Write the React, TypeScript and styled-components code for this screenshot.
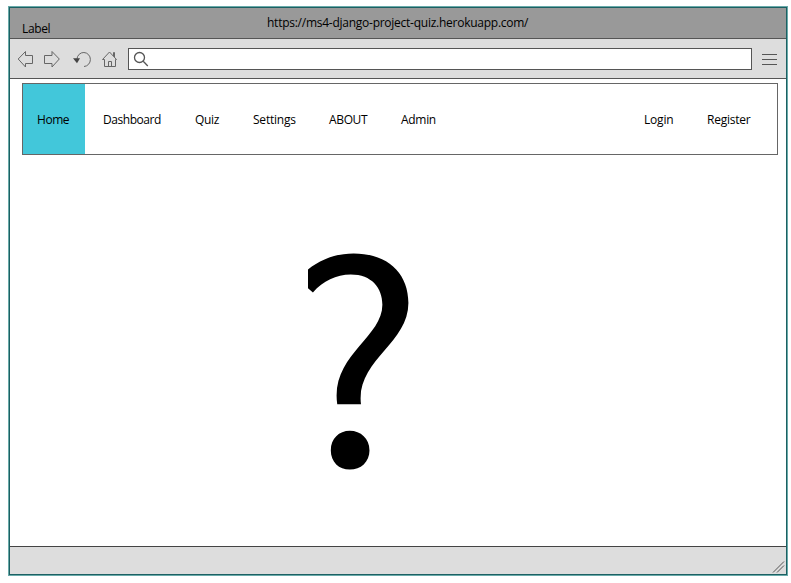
import React from 'react';
import styled, { createGlobalStyle } from 'styled-components';

const GlobalStyle = createGlobalStyle`
  * { box-sizing: border-box; }
  body { margin: 0; background: #fff; color: #000; font: 12px/16px "Segoe UI", "Open Sans", "Noto Sans", sans-serif; }
`;

const Browser = styled.main`
  display: flex;
  flex-direction: column;
  width: 780px;
  height: 570px;
  margin: 6px 0 0 8px;
  border: 1px solid #69aaa9;
  outline: 1px solid #1c6063;
  outline-offset: -2px;
  padding: 1px;
`;

const TitleBar = styled.header`
  display: flex;
  height: 31px;
  flex: none;
  background: #999;
  border-bottom: 1px solid #555;
`;

const Text = styled.span<{ $spacing?: number }>`
  white-space: nowrap;
  letter-spacing: ${p => p.$spacing ?? -0.35}px;
`;

const TabTitle = styled(Text)`
  width: 245px;
  padding: 13px 0 0 12px;
`;

const Address = styled(Text)`
  padding: 7px 0 0 12px;
`;

const Toolbar = styled.div`
  display: flex;
  align-items: center;
  height: 40px;
  flex: none;
  background: #ddd;
  border-bottom: 1px solid #555;
`;

const Tools = styled.svg`
  width: 118px;
  height: 39px;
  flex: none;
  fill: none;
  stroke: #666;
`;

const SearchField = styled.div`
  width: 624px;
  height: 22px;
  background: #fff;
  border: 1px solid #555;
  padding: 2px 0 0 4px;
`;

const SearchIcon = styled.svg`
  display: block;
  width: 17px;
  height: 17px;
  fill: none;
  stroke: #555;
  stroke-width: 1.3;
`;

const MenuButton = styled.div`
  display: flex;
  flex-direction: column;
  gap: 4px;
  width: 15px;
  margin: 2px 0 0 10px;
`;

const MenuLine = styled.div`
  height: 1px;
  background: #555;
`;

const Page = styled.section`
  flex: 1;
  min-height: 0;
  padding: 4px 8px 0 12px;
`;

const Nav = styled.nav`
  display: flex;
  height: 72px;
  border: 1px solid #666;
`;

const NavItem = styled.a<{ $width: number; $active?: boolean }>`
  display: flex;
  align-items: center;
  width: ${p => p.$width}px;
  padding: 1px 0 0 ${p => (p.$active ? 14 : 18)}px;
  background: ${p => (p.$active ? '#42c7da' : 'transparent')};
`;

const Account = styled.div`
  display: flex;
  margin-left: auto;
`;

const QuestionMark = styled.div`
  margin: 39px 0 0 269px;
  width: 140px;
  font-family: "Noto Sans CJK SC", sans-serif;
  font-size: 279px;
  line-height: 300px;
  transform: scaleX(1.05);
  transform-origin: 118px 0;
  clip-path: inset(0 0 0 21.8px);
`;

const StatusBar = styled.footer`
  display: flex;
  justify-content: flex-end;
  align-items: flex-end;
  height: 28px;
  flex: none;
  background: #ddd;
  border-top: 1px solid #444;
`;

const Grip = styled.svg`
  width: 14px;
  height: 14px;
  margin: 0 1px 1px 0;
  fill: none;
  stroke: #555;
`;

const links = [
  { label: 'Home', width: 62, spacing: -0.45, active: true },
  { label: 'Dashboard', width: 92, spacing: -0.45 },
  { label: 'Quiz', width: 58 },
  { label: 'Settings', width: 76, spacing: -0.22 },
  { label: 'ABOUT', width: 72 },
  { label: 'Admin', width: 72, spacing: -0.3 },
];

export default function App() {
  return (
    <>
      <GlobalStyle />
      <Browser>
        <TitleBar>
          <TabTitle>Label</TabTitle>
          <Address $spacing={-0.255}>https://ms4-django-project-quiz.herokuapp.com/</Address>
        </TitleBar>
        <Toolbar>
          <Tools viewBox="0 0 118 39">
            <path d="M8.2 20 15.5 12.5V16.5H22.5V24.5H15.5V28Z" />
            <path d="M49.3 20 42 12.5V16.5H34.5V24.5H42V28Z" />
            <path d="M67 20A6.7 7 0 1 1 74 27.5" />
            <path d="M63 19.2H70L67 24.2Z" fill="#444" stroke="none" />
            <path d="M92.5 20.5 99.5 13 106.5 20.5H105.5V27.5H94.5V20.5ZM98.5 27.5V22.5H101.5V27.5M103.5 17V13.5H104.5V18" />
          </Tools>
          <SearchField>
            <SearchIcon viewBox="0 0 17 17">
              <circle cx="6.5" cy="6.5" r="5" />
              <path d="M10.2 10.2 14.8 15" />
            </SearchIcon>
          </SearchField>
          <MenuButton><MenuLine /><MenuLine /><MenuLine /></MenuButton>
        </Toolbar>
        <Page>
          <Nav>
            {links.map(l => (
              <NavItem key={l.label} $width={l.width} $active={l.active}>
                <Text $spacing={l.spacing}>{l.label}</Text>
              </NavItem>
            ))}
            <Account>
              <NavItem $width={63}><Text $spacing={-0.2}>Login</Text></NavItem>
              <NavItem $width={88}><Text $spacing={-0.25}>Register</Text></NavItem>
            </Account>
          </Nav>
          <QuestionMark>?</QuestionMark>
        </Page>
        <StatusBar>
          <Grip viewBox="0 0 14 14"><path d="M2 13.5 13 2.5M6 13.5 13 6.5" /></Grip>
        </StatusBar>
      </Browser>
    </>
  );
}
